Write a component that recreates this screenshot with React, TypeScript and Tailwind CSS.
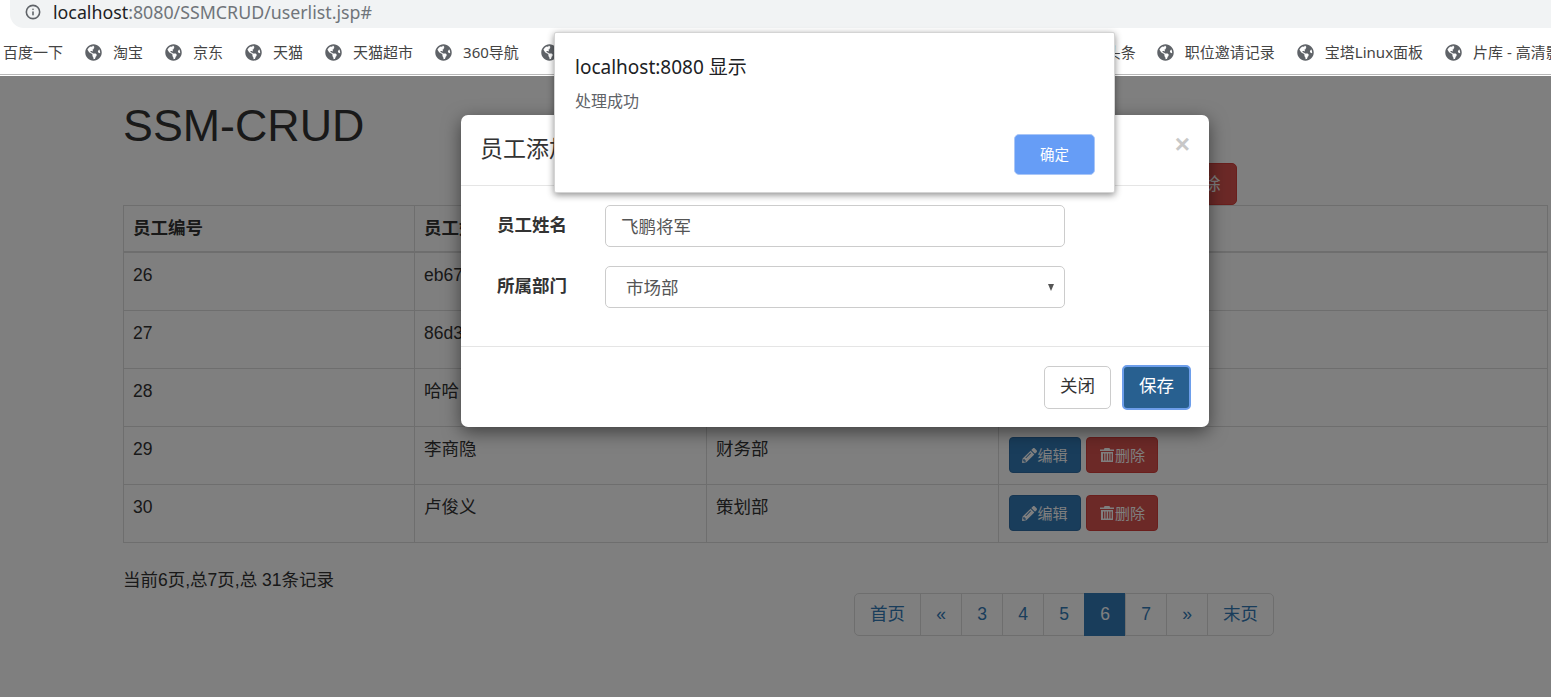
import { FaGlobeAmericas, FaPencilAlt } from "react-icons/fa";
import { Info } from "lucide-react";

const cjk = "font-['Liberation_Sans','Noto_Sans_CJK_SC',sans-serif]";
const ui = "font-['Noto_Sans','Noto_Sans_CJK_SC',sans-serif]";

const leftMarks = ["淘宝", "京东", "天猫", "天猫超市", "360导航"];
const rightMarks = ["职位邀请记录", "宝塔Linux面板", "片库 - 高清影视"];

const rows = [
  { id: 26, name: "eb67a", dept: "市场部" },
  { id: 27, name: "86d3c", dept: "市场部" },
  { id: 28, name: "哈哈", dept: "财务部" },
  { id: 29, name: "李商隐", dept: "财务部" },
  { id: 30, name: "卢俊义", dept: "策划部" },
];

const pages = ["3", "4", "5", "6", "7", "»"];

const Bookmark = ({ label }: { label: string }) => (
  <div className="flex flex-none items-center mr-[22px]">
    <FaGlobeAmericas className="w-[17px] h-[17px] text-[#5f6368] mr-[11px]" />
    <span className="whitespace-nowrap">{label}</span>
  </div>
);

const TrashIcon = () => (
  <svg viewBox="0 0 16 16" className="w-[16px] h-[16px]" fill="currentColor">
    <path d="M5.5 1h5l.6 1.6H15v1.3H1V2.6h3.9zM2 5h12v10H2zm2 1.5v7h1.2v-7zm2.5 0v7h1.2v-7zm2.6 0v7h1.2v-7zm2.4 0v7h1.2v-7z" fillRule="evenodd" />
  </svg>
);

const App = () => {
  return (
    <div className={`relative w-[1551px] h-[697px] overflow-hidden bg-white text-[#333] ${cjk}`}>
      {/* browser chrome */}
      <div className="h-[28px] bg-white">
        <div className="ml-[10px] h-[28px] rounded-bl-[14px] bg-[#f1f3f4] flex items-center pl-[15px] pb-[5px]">
          <Info className="w-[16px] h-[16px] text-[#5f6368]" strokeWidth={2.4} />
          <span className={`ml-[12px] text-[17.8px] leading-[24px] text-[#70757a] ${ui}`}>
            <span className="text-[#202124]">localhost</span>:8080/SSMCRUD/userlist.jsp#
          </span>
        </div>
      </div>
      <div className={`h-[47px] border-b border-[#b8b8b8] flex items-center pl-[3px] pt-[2px] text-[15px] text-[#444] overflow-hidden ${ui}`}>
        <span className="flex-none mr-[22px] whitespace-nowrap">百度一下</span>
        {leftMarks.map((m) => (
          <Bookmark key={m} label={m} />
        ))}
        <FaGlobeAmericas className="flex-none w-[17px] h-[17px] text-[#5f6368]" />
        <div className="flex-none w-[548px]" />
        <span className="flex-none mr-[21px] whitespace-nowrap">头条</span>
        {rightMarks.map((m) => (
          <Bookmark key={m} label={m} />
        ))}
      </div>

      {/* page */}
      <div className="h-[1px] bg-white" />
      <div className="ml-[123px] w-[1424px] text-[17.5px] leading-[25px]">
        <h1 className="pt-[23px] text-[44.8px] leading-[52px] font-normal">SSM-CRUD</h1>
        <div className="mt-[12px] pr-[310px] flex justify-end gap-[5px]">
          <button className="w-[68px] h-[42px] rounded-[5px] bg-[#337ab7] border border-[#2e6da4] text-white">新增</button>
          <button className="w-[68px] h-[42px] rounded-[5px] bg-[#d9534f] border border-[#d43f3a] text-white">删除</button>
        </div>
        <table className="w-[1424px] table-fixed border-collapse">
          <colgroup>
            <col className="w-[291px]" />
            <col className="w-[292px]" />
            <col className="w-[292px]" />
            <col className="w-[549px]" />
          </colgroup>
          <thead>
            <tr className="h-[46px] border-b-2 border-[#ddd]">
              {["员工编号", "员工姓名", "所属部门", "操作"].map((h) => (
                <th key={h} className="border border-[#ddd] border-b-2 px-[9px] text-left align-middle font-bold">
                  {h}
                </th>
              ))}
            </tr>
          </thead>
          <tbody>
            {rows.map((r, i) => (
              <tr key={r.id} className={i === 0 ? "h-[59px]" : "h-[58px]"}>
                <td className="border border-[#ddd] px-[9px] pt-[10px] align-top">{r.id}</td>
                <td className="border border-[#ddd] px-[9px] pt-[10px] align-top">{r.name}</td>
                <td className="border border-[#ddd] px-[9px] pt-[10px] align-top">{r.dept}</td>
                <td className="border border-[#ddd] px-[10px] pt-[10px] align-top">
                  <div className="flex gap-[5px] text-[15px] text-white">
                    <button className="w-[72px] h-[36px] rounded-[4px] bg-[#337ab7] border border-[#2e6da4] flex items-center justify-center">
                      <FaPencilAlt className="w-[15px] h-[15px]" />
                      编辑
                    </button>
                    <button className="w-[72px] h-[36px] rounded-[4px] bg-[#d9534f] border border-[#d43f3a] flex items-center justify-center">
                      <TrashIcon />
                      删除
                    </button>
                  </div>
                </td>
              </tr>
            ))}
          </tbody>
        </table>
        <p className="mt-[25px]">当前6页,总7页,总 31条记录</p>
        <div className="ml-[731px] flex h-[43px] w-[420px] text-[#337ab7]">
          <a className="w-[67px] flex items-center justify-center border border-[#ddd] rounded-l-[5px]">首页</a>
          <a className="w-[42px] -ml-px flex items-center justify-center border border-[#ddd]">«</a>
          {pages.map((p) => (
            <a
              key={p}
              className={
                p === "6"
                  ? "w-[42px] -ml-px flex items-center justify-center bg-[#337ab7] border border-[#337ab7] text-white"
                  : "w-[42px] -ml-px flex items-center justify-center border border-[#ddd]"
              }
            >
              {p}
            </a>
          ))}
          <a className="w-[67px] -ml-px flex items-center justify-center border border-[#ddd] rounded-r-[5px]">末页</a>
        </div>
      </div>

      {/* backdrop + modal */}
      <div className="absolute left-0 right-0 top-[76px] bottom-0 bg-black/50">
        <div className="absolute left-[461px] top-[39px] w-[748px] h-[312px] rounded-[7px] bg-white shadow-[0_5px_18px_rgba(0,0,0,0.5)] flex flex-col">
          <div className="h-[71px] border-b border-[#e5e5e5] flex items-start justify-between pl-[19px] pr-[19px]">
            <h4 className="mt-[18px] text-[23px] leading-[33px]">员工添加</h4>
            <span className="mt-[14px] text-[26px] leading-[30px] font-bold text-[#c8c8c8]">×</span>
          </div>
          <div className="flex-1 pt-[19px] text-[17.5px]">
            <div className="flex items-center h-[42px]">
              <label className="ml-[36px] w-[108px] pb-[2px] font-bold">员工姓名</label>
              <div className="w-[460px] h-[42px] rounded-[5px] border border-[#ccc] flex items-center pl-[15px] pt-[2px] text-[#555]">飞鹏将军</div>
            </div>
            <div className="flex items-center h-[42px] mt-[19px]">
              <label className="ml-[36px] w-[108px] pb-[2px] font-bold">所属部门</label>
              <div className="relative w-[460px] h-[42px] rounded-[5px] border border-[#ccc] flex items-center pl-[20px] pt-[2px] text-[#555]">
                市场部
                <span className="absolute right-[10px] top-[17px] w-0 h-0 border-x-[3.5px] border-x-transparent border-t-[7px] border-t-[#555]" />
              </div>
            </div>
          </div>
          <div className="h-[81px] border-t border-[#e5e5e5] flex items-center justify-end gap-[11px] pr-[18px] text-[17.5px]">
            <button className="w-[67px] h-[43px] pb-[2px] rounded-[5px] border border-[#ccc] bg-white text-[#333]">关闭</button>
            <button className="w-[69px] h-[45px] pb-[2px] rounded-[5px] border-2 border-[#6d9eeb] bg-[#286090] text-white">保存</button>
          </div>
        </div>
      </div>

      {/* browser alert */}
      <div className={`absolute left-[554px] top-[32px] w-[561px] h-[161px] rounded-[2px] border border-[#d4d4d4] bg-white shadow-[0_2px_7px_rgba(0,0,0,0.45)] pl-[20px] pr-[19px] ${ui}`}>
        <p className="mt-[20px] text-[19px] leading-[28px] text-[#202124]">localhost:8080 显示</p>
        <p className="mt-[8px] text-[16px] leading-[24px] text-[#5f6368]">处理成功</p>
        <div className="mt-[21px] flex justify-end">
          <button className="w-[81px] h-[41px] rounded-[5px] border border-[#a9c6f7] bg-[#669df6] text-[14.5px] text-white">确定</button>
        </div>
      </div>
    </div>
  );
};

export default App;
